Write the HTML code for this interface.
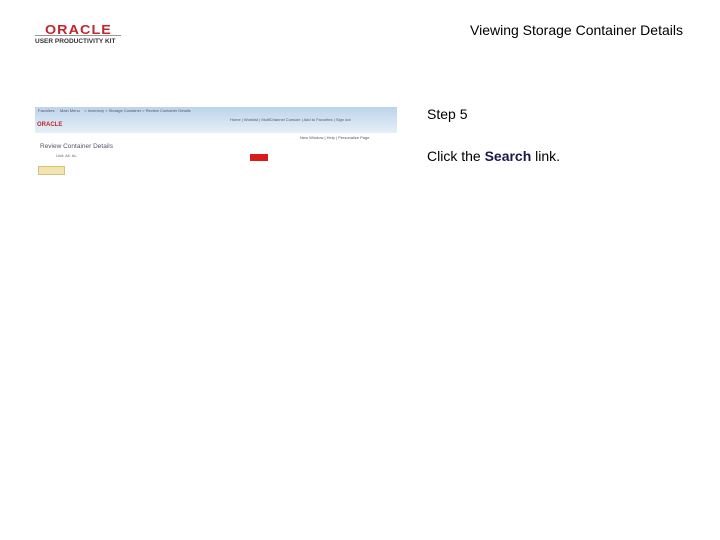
<!DOCTYPE html>
<html><head><style>
body{margin:0;width:720px;height:540px;background:#fff;font-family:"Liberation Sans",sans-serif;position:relative;overflow:hidden}
.a{position:absolute}
</style></head><body>
<div class="a" style="left:48px;top:22px;font-size:13px;font-weight:bold;color:#c4262e;letter-spacing:1px;transform:scaleX(1.1)">ORACLE</div>
<div class="a" style="left:35px;top:35px;width:86px;height:1px;background:#999"></div>
<div class="a" style="left:35px;top:38px;font-size:6.5px;font-weight:bold;color:#333">USER PRODUCTIVITY KIT</div>
<div class="a" style="left:470px;top:22px;font-size:14px;color:#000">Viewing Storage Container Details</div>

<div class="a" style="left:35px;top:107px;width:362px;height:26px;background:linear-gradient(#bcd4ea,#e6eef7)"></div>
<div class="a" style="left:38px;top:108px;font-size:4px;color:#556">Favorites &nbsp;&nbsp;&nbsp; Main Menu &nbsp;&nbsp; &gt; Inventory &gt; Storage Container &gt; Review Container Details</div>
<div class="a" style="left:230px;top:117px;font-size:4px;color:#556">Home | Worklist | MultiChannel Console | Add to Favorites | Sign out</div>
<div class="a" style="left:37px;top:122px;font-size:6px;font-weight:bold;color:#c4262e">ORACLE</div>
<div class="a" style="left:300px;top:135px;font-size:4px;color:#556">New Window | Help | Personalize Page</div>
<div class="a" style="left:40px;top:143px;font-size:6.5px;color:#556">Review Container Details</div>
<div class="a" style="left:56px;top:153px;font-size:4px;color:#666">Unit: All &nbsp;AL</div>
<div class="a" style="left:250px;top:154px;width:18px;height:7px;background:#d81a1a"></div>
<div class="a" style="left:38px;top:166px;width:25px;height:7px;background:#f4e4b0;border:1px solid #d8c080"></div>

<div class="a" style="left:427px;top:106px;font-size:14px">Step 5</div>
<div class="a" style="left:427px;top:148px;font-size:14px">Click the <b style="color:#1a1a4a">Search</b> link.</div>
</body></html>
